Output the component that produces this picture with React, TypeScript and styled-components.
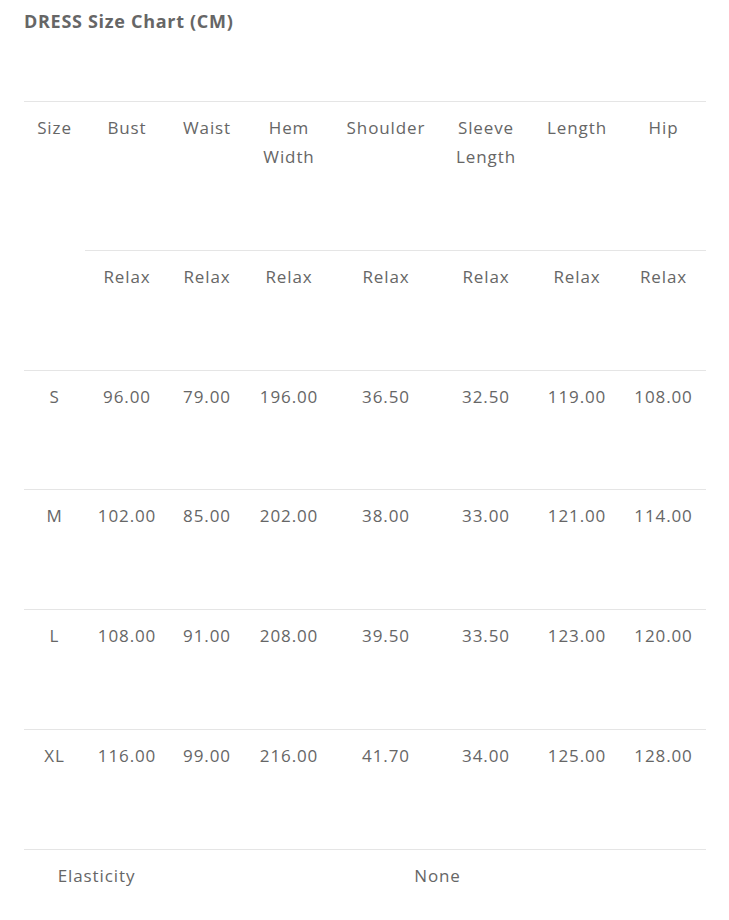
import React from "react";
import styled, { createGlobalStyle } from "styled-components";

const Global = createGlobalStyle`
  html, body { margin: 0; padding: 0; background: #fff; }
  body { font-family: "Open Sans", "Liberation Sans", sans-serif; color: #666; }
`;

const Page = styled.div`
  padding: 0 23px 0 24px;
`;

const Title = styled.h2`
  margin: 8px 0 0;
  font-size: 18px;
  line-height: 26px;
  font-weight: 700;
  letter-spacing: 0.7px;
  color: #666;
`;

const Table = styled.table`
  margin-top: 67px;
  width: 682px;
  border-collapse: collapse;
  table-layout: fixed;
`;

const Row = styled.tr<{ $h: number }>`
  height: ${(p) => p.$h}px;
`;

const Cell = styled.td`
  vertical-align: top;
  text-align: center;
  padding: 11px 0 0;
  font-size: 17px;
  line-height: 29px;
  letter-spacing: 0.9px;
  color: #666;
  border-top: 1px solid #e5e5e5;
`;

const widths = [61, 84, 76, 88, 106, 94, 88, 85];
const headers = ["Bust", "Waist", "Hem\nWidth", "Shoulder", "Sleeve\nLength", "Length", "Hip"];
const rows: [string, string[], number][] = [
  ["S", ["96.00", "79.00", "196.00", "36.50", "32.50", "119.00", "108.00"], 119],
  ["M", ["102.00", "85.00", "202.00", "38.00", "33.00", "121.00", "114.00"], 120],
  ["L", ["108.00", "91.00", "208.00", "39.50", "33.50", "123.00", "120.00"], 120],
  ["XL", ["116.00", "99.00", "216.00", "41.70", "34.00", "125.00", "128.00"], 120],
];

const Multi = ({ text }: { text: string }) => (
  <>
    {text.split("\n").map((t, i) => (
      <React.Fragment key={i}>
        {i > 0 && <br />}
        {t}
      </React.Fragment>
    ))}
  </>
);

export default function App() {
  return (
    <Page>
      <Global />
      <Title>DRESS Size Chart (CM)</Title>
      <Table>
        <colgroup>
          {widths.map((w, i) => (
            <col key={i} style={{ width: w }} />
          ))}
        </colgroup>
        <tbody>
          <Row $h={149}>
            <Cell rowSpan={2}>Size</Cell>
            {headers.map((h) => (
              <Cell key={h}>
                <Multi text={h} />
              </Cell>
            ))}
          </Row>
          <Row $h={120}>
            {headers.map((h) => (
              <Cell key={h}>Relax</Cell>
            ))}
          </Row>
          {rows.map(([s, vals, h]) => (
            <Row $h={h} key={s}>
              <Cell>{s}</Cell>
              {vals.map((v, i) => (
                <Cell key={i}>{v}</Cell>
              ))}
            </Row>
          ))}
          <Row $h={60}>
            <Cell colSpan={2}>Elasticity</Cell>
            <Cell colSpan={6}>None</Cell>
          </Row>
        </tbody>
      </Table>
    </Page>
  );
}
